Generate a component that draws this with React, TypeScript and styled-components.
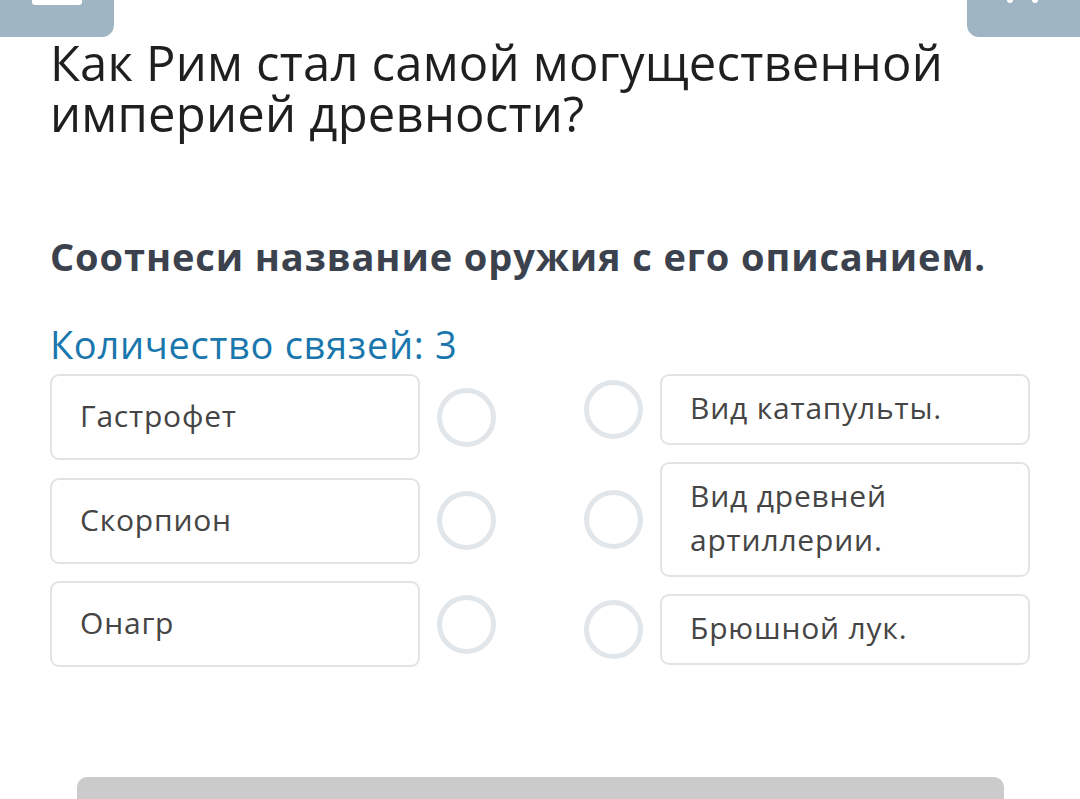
import React from "react";
import styled, { createGlobalStyle } from "styled-components";

const GlobalStyle = createGlobalStyle`
  html, body {
    margin: 0;
    padding: 0;
    background: #ffffff;
    font-family: "Open Sans", "Noto Sans", sans-serif;
    overflow: hidden;
  }
`;

const Page = styled.div`
  width: 1080px;
  height: 799px;
  position: relative;
  overflow: hidden;
  display: flex;
  flex-direction: column;
`;

const TopBar = styled.div`
  display: flex;
  justify-content: space-between;
  height: 37px;
`;

const CornerButton = styled.div<{ side: "left" | "right" }>`
  width: ${({ side }) => (side === "left" ? 114 : 113)}px;
  height: 37px;
  background: #a0b5c3;
  border-radius: ${({ side }) => (side === "left" ? "0 0 12px 0" : "0 0 0 12px")};
  position: relative;
`;

const MenuBar = styled.div`
  position: absolute;
  left: 32px;
  top: -4px;
  width: 50px;
  height: 9px;
  border-radius: 3px;
  background: #ffffff;
`;

const Dot = styled.div<{ x: number }>`
  position: absolute;
  left: ${({ x }) => x}px;
  top: -3px;
  width: 6px;
  height: 6px;
  border-radius: 50%;
  background: #ffffff;
`;

const Content = styled.div`
  padding: 0 50px;
`;

const Title = styled.h1`
  margin: 0;
  font-size: 49px;
  line-height: 51px;
  letter-spacing: 0.2px;
  font-weight: 400;
  color: #1f1f1f;
`;

const Task = styled.h2`
  margin: 94px 0 0;
  font-size: 38px;
  line-height: 46px;
  letter-spacing: 0.9px;
  font-weight: 700;
  color: #3b424d;
`;

const Counter = styled.div`
  margin-top: 42px;
  font-size: 38px;
  line-height: 46px;
  letter-spacing: 0.7px;
  color: #1a77ad;
`;

const Columns = styled.div`
  display: flex;
  justify-content: space-between;
  width: 980px;
  margin-top: 7px;
`;

const Column = styled.div<{ gap: number }>`
  display: flex;
  flex-direction: column;
  gap: ${({ gap }) => gap}px;
  width: 446px;
`;

const Item = styled.div`
  display: flex;
  align-items: center;
  gap: 17px;
`;

const Card = styled.div<{ pad: string }>`
  box-sizing: border-box;
  width: 370px;
  border: 2px solid #e3e3e3;
  border-radius: 9px;
  padding: ${({ pad }) => pad};
  font-size: 30px;
  line-height: 44px;
  letter-spacing: 0.8px;
  color: #454545;
`;

const Circle = styled.div`
  box-sizing: border-box;
  width: 59px;
  height: 59px;
  flex-shrink: 0;
  border-radius: 50%;
  border: 5px solid #e1e6eb;
`;

const BottomBar = styled.div`
  position: absolute;
  left: 77px;
  top: 777px;
  width: 927px;
  height: 40px;
  border-radius: 10px 10px 0 0;
  background: #cbcbcb;
`;

const leftItems = ["Гастрофет", "Скорпион", "Онагр"];
const rightItems = ["Вид катапульты.", "Вид древней артиллерии.", "Брюшной лук."];

export default function App() {
  return (
    <>
      <GlobalStyle />
      <Page>
        <TopBar>
          <CornerButton side="left">
            <MenuBar />
          </CornerButton>
          <CornerButton side="right">
            <Dot x={40} />
            <Dot x={65} />
          </CornerButton>
        </TopBar>
        <Content>
          <Title>
            Как Рим стал самой могущественной
            <br />
            империей древности?
          </Title>
          <Task>Соотнеси название оружия с его описанием.</Task>
          <Counter>Количество связей: 3</Counter>
          <Columns>
            <Column gap={17.5}>
              {leftItems.map((t) => (
                <Item key={t}>
                  <Card pad="18px 28px 20px">{t}</Card>
                  <Circle />
                </Item>
              ))}
            </Column>
            <Column gap={17}>
              {rightItems.map((t) => (
                <Item key={t}>
                  <Circle />
                  <Card pad="10px 28px 13px">{t}</Card>
                </Item>
              ))}
            </Column>
          </Columns>
        </Content>
        <BottomBar />
      </Page>
    </>
  );
}
